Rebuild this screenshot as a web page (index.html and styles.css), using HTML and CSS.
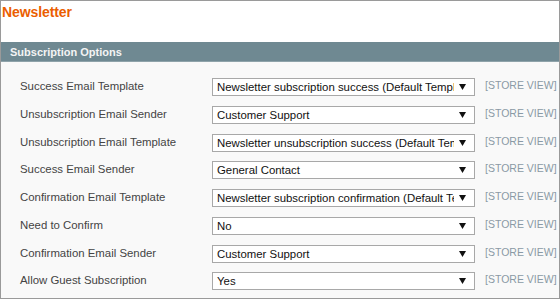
FILE: index.html
```html
<!DOCTYPE html>
<html lang="en">
<head>
    <meta charset="UTF-8">
    <title>Newsletter - Configuration</title>
    <link rel="stylesheet" href="styles.css">
</head>
<body>
    <div class="frame">
        <h1 class="page-title">Newsletter</h1>
        <div class="title-rule"></div>

        <div class="section">
            <div class="section-head">Subscription Options</div>
            <div class="section-body">
                <div class="field-row">
                    <label class="field-label">Success Email Template</label>
                    <div class="select-box">
                        <span class="select-value">Newsletter subscription success (Default Template from Locale)</span>
                        <span class="select-arrow"><svg width="7" height="6" viewBox="0 0 7 6"><polygon points="0,0 7,0 3.5,6"/></svg></span>
                    </div>
                    <span class="scope">[STORE VIEW]</span>
                </div>
                <div class="field-row">
                    <label class="field-label">Unsubscription Email Sender</label>
                    <div class="select-box">
                        <span class="select-value">Customer Support</span>
                        <span class="select-arrow"><svg width="7" height="6" viewBox="0 0 7 6"><polygon points="0,0 7,0 3.5,6"/></svg></span>
                    </div>
                    <span class="scope">[STORE VIEW]</span>
                </div>
                <div class="field-row">
                    <label class="field-label">Unsubscription Email Template</label>
                    <div class="select-box">
                        <span class="select-value">Newsletter unsubscription success (Default Template from Locale)</span>
                        <span class="select-arrow"><svg width="7" height="6" viewBox="0 0 7 6"><polygon points="0,0 7,0 3.5,6"/></svg></span>
                    </div>
                    <span class="scope">[STORE VIEW]</span>
                </div>
                <div class="field-row">
                    <label class="field-label">Success Email Sender</label>
                    <div class="select-box">
                        <span class="select-value">General Contact</span>
                        <span class="select-arrow"><svg width="7" height="6" viewBox="0 0 7 6"><polygon points="0,0 7,0 3.5,6"/></svg></span>
                    </div>
                    <span class="scope">[STORE VIEW]</span>
                </div>
                <div class="field-row">
                    <label class="field-label">Confirmation Email Template</label>
                    <div class="select-box">
                        <span class="select-value">Newsletter subscription confirmation (Default Template from Locale)</span>
                        <span class="select-arrow"><svg width="7" height="6" viewBox="0 0 7 6"><polygon points="0,0 7,0 3.5,6"/></svg></span>
                    </div>
                    <span class="scope">[STORE VIEW]</span>
                </div>
                <div class="field-row">
                    <label class="field-label">Need to Confirm</label>
                    <div class="select-box">
                        <span class="select-value">No</span>
                        <span class="select-arrow"><svg width="7" height="6" viewBox="0 0 7 6"><polygon points="0,0 7,0 3.5,6"/></svg></span>
                    </div>
                    <span class="scope">[STORE VIEW]</span>
                </div>
                <div class="field-row">
                    <label class="field-label">Confirmation Email Sender</label>
                    <div class="select-box">
                        <span class="select-value">Customer Support</span>
                        <span class="select-arrow"><svg width="7" height="6" viewBox="0 0 7 6"><polygon points="0,0 7,0 3.5,6"/></svg></span>
                    </div>
                    <span class="scope">[STORE VIEW]</span>
                </div>
                <div class="field-row">
                    <label class="field-label">Allow Guest Subscription</label>
                    <div class="select-box">
                        <span class="select-value">Yes</span>
                        <span class="select-arrow"><svg width="7" height="6" viewBox="0 0 7 6"><polygon points="0,0 7,0 3.5,6"/></svg></span>
                    </div>
                    <span class="scope">[STORE VIEW]</span>
                </div>
            </div>
        </div>
    </div>
</body>
</html>
```

FILE: styles.css
```css
:root {
    --frame-border: #9a9a9a;
    --title-color: #eb5e00;
    --head-bg: #6f8992;
    --body-bg: #f9f9f9;
    --label-color: #444444;
    --scope-color: #8a9aa5;
}

* {
    margin: 0;
    padding: 0;
    box-sizing: border-box;
}

body {
    font-family: "Liberation Sans", Arial, sans-serif;
    font-size: 11.4px;
    background: #ffffff;
    width: 560px;
    height: 300px;
    overflow: hidden;
}

.frame {
    width: 560px;
    height: 299px;
    border: 1px solid var(--frame-border);
    background: #ffffff;
    overflow: hidden;
    display: flex;
    flex-direction: column;
}

.page-title {
    font-size: 14px;
    line-height: 18px;
    font-weight: bold;
    color: var(--title-color);
    padding: 2px 0 0 1px;
    letter-spacing: -0.1px;
}

.title-rule {
    height: 3px;
    margin-top: 3px;
    background: #dfdfdf;
}

.section {
    margin-top: 18px;
    flex: 1;
    display: flex;
    flex-direction: column;
}

.section-head {
    height: 20px;
    line-height: 20px;
    background: var(--head-bg);
    border-bottom: 1px solid #8fa3aa;
    color: #f4f4f4;
    font-weight: bold;
    font-size: 11px;
    padding-left: 9px;
}

.section-body {
    flex: 1;
    background: var(--body-bg);
    padding: 16px 0 0 19px;
}

.field-row {
    display: flex;
    align-items: flex-start;
    height: 27.75px;
}

.field-label {
    width: 192px;
    flex-shrink: 0;
    color: var(--label-color);
    line-height: 15px;
    padding-top: 1px;
}

.select-box {
    width: 263px;
    height: 18px;
    flex-shrink: 0;
    display: flex;
    align-items: center;
    background: #ffffff;
    border: 1px solid #a8a8a8;
    color: #111111;
}

.select-value {
    flex: 1;
    overflow: hidden;
    white-space: nowrap;
    padding-left: 4px;
    line-height: 16px;
}

.select-arrow {
    width: 20px;
    flex-shrink: 0;
    display: flex;
    justify-content: flex-start;
    padding-left: 5px;
}

.select-arrow svg {
    fill: #111111;
}

.scope {
    margin-left: 10px;
    color: var(--scope-color);
    font-size: 10.5px;
    line-height: 15px;
    white-space: nowrap;
}
```
